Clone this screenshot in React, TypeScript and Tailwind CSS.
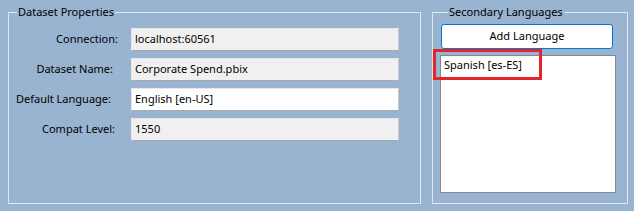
import React from 'react';

const font = { fontFamily: '"Noto Sans", "Open Sans", sans-serif' };

type Field = { label: string; value: string; pad: string; editable?: boolean };

const fields: Field[] = [
  { label: 'Connection:', value: 'localhost:60561', pad: 'pr-[13px]' },
  { label: 'Dataset Name:', value: 'Corporate Spend.pbix', pad: 'pr-[18px]' },
  { label: 'Default Language:', value: 'English [en-US]', pad: 'pr-[20px]', editable: true },
  { label: 'Compat Level:', value: '1550', pad: 'pr-[16px]' },
];

function TextBox({ value, editable }: { value: string; editable?: boolean }) {
  return (
    <div
      className={`flex h-[23px] w-[268px] items-center border border-t-[#e6e6e6] border-l-[#e6e6e6] border-b-[#a8a8a8] border-r-[#c8c8c8] pl-[3px] text-[11px] text-black ${
        editable ? 'bg-white' : 'bg-[#f0f0f0]'
      }`}
    >
      {value}
    </div>
  );
}

export default function App() {
  return (
    <div className="relative flex h-[211px] w-[634px] gap-[11px] bg-[#99b4d1] pl-[8px] pt-[4px] text-black" style={font}>
      <fieldset className="h-[200px] w-[413px] border border-[#e1e7ee] px-0 pt-[8px]">
        <legend className="ml-[8px] px-[1px] text-[11px] leading-[16px]">Dataset Properties</legend>
        <div className="flex flex-col gap-[7px]">
          {fields.map((f) => (
            <div key={f.label} className="flex items-center">
              <div className={`w-[122px] whitespace-nowrap text-right text-[11px] ${f.pad}`}>{f.label}</div>
              <TextBox value={f.value} editable={f.editable} />
            </div>
          ))}
        </div>
      </fieldset>

      <fieldset className="h-[200px] w-[196px] border border-[#e1e7ee] pl-[7px] pt-[4px]">
        <legend className="ml-[8px] px-[1px] text-[11px] leading-[16px]">Secondary Languages</legend>
        <div className="flex flex-col gap-[6px]">
          <button className="ml-[1px] h-[25px] w-[172px] rounded-[3px] border border-[#0078d7] bg-white text-[11px] text-black">
            Add Language
          </button>
          <div className="h-[138px] w-[176px] border border-[#828790] bg-white px-[3px] pt-[1px] text-[11px]">
            Spanish [es-ES]
          </div>
        </div>
      </fieldset>

      <div className="absolute left-[433px] top-[49px] h-[31px] w-[109px] border-[3px] border-[#e3242b]" />
    </div>
  );
}
